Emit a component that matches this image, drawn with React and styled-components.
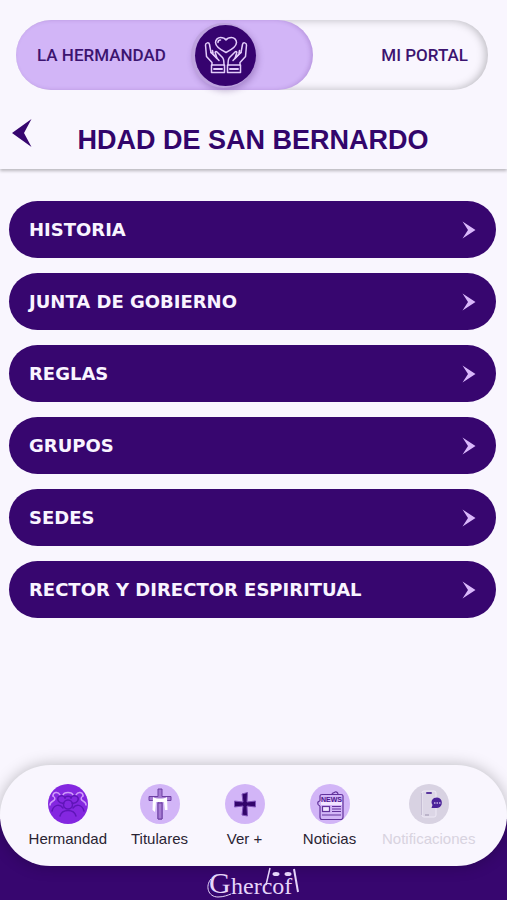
import React, { useState } from 'react';
import styled, { createGlobalStyle } from 'styled-components';

const sections = [
  'HISTORIA',
  'JUNTA DE GOBIERNO',
  'REGLAS',
  'GRUPOS',
  'SEDES',
  'RECTOR Y DIRECTOR ESPIRITUAL',
];

const HandsHeartIcon = () => (
  <svg width="44" height="38" viewBox="0 0 44 38" fill="none" stroke="#e3cdfb" strokeWidth="1.5" strokeLinejoin="round" strokeLinecap="round" aria-hidden="true">
    <path d="M22 16.5C17 14 11.500 11 11.500 6.500C11.500 3.500 14 1.500 16.500 1.500C19 1.500 21 2.500 22 4C23 2.500 25 1.500 27.500 1.500C30 1.500 32.500 3.500 32.500 6.500C32.500 11 27 14 22 16.500Z" />
    <path d="M14 6.500C14 5 15 4 16.500 4" />
    <path d="M8 29V26.500L2.500 20.500L1.500 9C1.500 6.500 5 6 5.500 8.500L7 16.500L9 17L8.500 14.500" />
    <path d="M7 16.500L13 22.500L11.500 17.500C10.500 15.500 12 15 13.500 16.500L18.500 21.500C20 23 20 24 20 29" />
    <path d="M9 18L15 24.500" />
    <path d="M36 29V26.500L41.500 20.500L42.500 9C42.500 6.500 39 6 38.500 8.500L37 16.500L35 17L35.500 14.500" />
    <path d="M37 16.500L31 22.500L32.500 17.500C33.500 15.500 32 15 30.500 16.500L25.500 21.500C24 23 24 24 24 29" />
    <path d="M35 18L29 24.500" />
    <rect x="7.500" y="29" width="13" height="7.500" />
    <rect x="23.500" y="29" width="13" height="7.500" />
    <path d="M10 33H18M26 33H34" strokeWidth="2" />
  </svg>
);

const BackIcon = () => (
  <svg width="20" height="28" viewBox="0 0 20 28" aria-hidden="true">
    <path d="M19.500 0L0 14L19.500 28L12 14Z" fill="#37066f" />
  </svg>
);

const ArrowIcon = () => (
  <svg width="14" height="18" viewBox="0 0 14 18" aria-hidden="true">
    <path d="M0.500 0.500L13.500 9L0.500 17.500L6 9Z" fill="#d9b8fb" />
  </svg>
);

const PeopleIcon = () => (
  <svg width="40" height="40" viewBox="0 0 40 40" fill="none" strokeWidth="1.500" strokeLinecap="round" aria-hidden="true">
    <g stroke="#cf9afa">
      <path d="M5 12C5 8 10 7 12 11" />
      <path d="M15 11C16 7.500 24 7.500 25 11" />
      <path d="M28 11C30 7 35 8 35 12" />
      <path d="M5 12C8 14 7 16 5 17C3 18 2 19 2 21" />
      <path d="M35 12C32 14 33 16 35 17C37 18 38 19 38 21" />
    </g>
    <g stroke="#5f15b8">
      <circle cx="20" cy="20.500" r="4.500" />
      <path d="M16 19C11 20 8 15 11 12.500C13 11 16 11.500 17 14" />
      <path d="M24 19C29 20 32 15 29 12.500C27 11 24 11.500 23 14" />
      <path d="M17 14C17 11.500 23 11.500 23 14" />
      <path d="M12 32C14 24.500 26 24.500 28 32" />
      <path d="M4 27C6 20 12 20 15 24" />
      <path d="M36 27C34 20 28 20 25 24" />
    </g>
  </svg>
);

const CrossIcon = () => (
  <svg width="40" height="40" viewBox="0 0 40 40" aria-hidden="true">
    <path d="M18 5H22V12.500H31V16.500H22V35H18V16.500H9V12.500H18Z" fill="#a57bd2" stroke="#6d3fa3" />
    <path d="M13 13C16 15 24 15 27 13L27.500 26H25L24 18H16L15 28L12.500 26Z" fill="#fff" />
    <path d="M18 19H22V35H18Z" fill="#a57bd2" stroke="#6d3fa3" />
  </svg>
);

const PlusIcon = () => (
  <svg width="40" height="40" viewBox="0 0 40 40" aria-hidden="true">
    <path d="M17 10L22.500 8.500L22 18L30.500 17V23L22 22L22.500 32L17 31L18 22L9.500 23V17L18 18Z" fill="#32056b" stroke="#8053ba" />
  </svg>
);

const NewsIcon = () => (
  <svg width="40" height="40" viewBox="0 0 40 40" fill="none" stroke="#62329b" strokeWidth="1.200" aria-hidden="true">
    <rect x="11" y="18" width="21" height="3" fill="#f1e5ff" stroke="none" />
    <path d="M10 17V12C10 11 11 10.500 12 10.500H31C32 10.500 33 11 33 12V33C33 34.500 32 35.500 31 35.500H12C11 35.500 10 34.500 10 33V22" />
    <path d="M22 10.500C22 8 24 9.500 25 8C27 7.500 28 9 28 10.500" />
    <path d="M10 17C7 17 7 21 10 22" />
    <text x="11" y="18" fill="#4d168b" stroke="none" fontFamily="Liberation Sans, sans-serif" fontSize="7" fontWeight="700">NEWS</text>
    <rect x="12.500" y="22.500" width="7" height="5" fill="#f1e5ff" />
    <path d="M22 22.500H31M22 25H31M22 27.500H31M12 31H31" />
  </svg>
);

const PhoneIcon = () => (
  <svg width="40" height="40" viewBox="0 0 40 40" aria-hidden="true">
    <rect x="13" y="7" width="14" height="26" rx="2" fill="#dcd6e6" stroke="#eee9f6" />
    <path d="M12.500 9V31" stroke="#c5bdd4" />
    <rect x="17" y="8" width="6" height="2" rx="1" fill="#5a369d" />
    <path d="M16 31H20" stroke="#9c93ae" />
    <path d="M22.500 24L23.500 21C21 17 24 13.500 28 13.500C34.500 13.500 34.500 24 28 24Z" fill="#4b2399" />
    <path d="M25 19H32" stroke="#c5b4e6" strokeWidth="1.500" strokeDasharray="1.500 1" />
  </svg>
);

const GhercofLogo = () => (
  <svg width="100" height="34" viewBox="0 0 100 34" role="img" aria-label="Ghercof">
    <g fill="#e6d5fa" fontFamily="Liberation Serif, serif">
      <text x="5" y="27" fontSize="30">G</text>
      <text x="27" y="28" fontSize="24">hercof</text>
    </g>
    <g stroke="#e6d5fa" fill="none">
      <path d="M66 2L62 19" strokeWidth="1.500" />
      <path d="M90 3L94 26" strokeWidth="2" />
      <path d="M7 13C1 20 4 31 14 31C20 31 24 29 27 28" />
    </g>
    <ellipse cx="72" cy="8" rx="3.500" ry="2" fill="#e6d5fa" />
    <ellipse cx="84" cy="8" rx="3.500" ry="2" fill="#e6d5fa" />
  </svg>
);

const navItems = [
  { label: 'Hermandad', icon: <PeopleIcon />, active: true },
  { label: 'Titulares', icon: <CrossIcon /> },
  { label: 'Ver +', icon: <PlusIcon /> },
  { label: 'Noticias', icon: <NewsIcon /> },
  { label: 'Notificaciones', icon: <PhoneIcon />, disabled: true },
];

const App = () => {
  const [, setSection] = useState(null);

  return (
    <>
      <GlobalStyle />
      <Page>
        <Header>
          <Switcher>
            <ActiveTab type="button">
              LA HERMANDAD
              <Knob><HandsHeartIcon /></Knob>
            </ActiveTab>
            <PortalTab type="button">MI PORTAL</PortalTab>
          </Switcher>
          <TitleRow>
            <BackButton type="button" aria-label="Volver"><BackIcon /></BackButton>
            <Title>HDAD DE SAN BERNARDO</Title>
          </TitleRow>
        </Header>
        <Menu>
          {sections.map((name) => (
            <MenuButton key={name} type="button" onClick={() => setSection(name)}>
              {name}
              <ArrowIcon />
            </MenuButton>
          ))}
        </Menu>
        <Bottom>
          <Nav>
            {navItems.map((item) => (
              <NavButton key={item.label} type="button" disabled={item.disabled}>
                <IconCircle $active={item.active} $disabled={item.disabled}>{item.icon}</IconCircle>
                {item.label}
              </NavButton>
            ))}
          </Nav>
          <Brand><GhercofLogo /></Brand>
        </Bottom>
      </Page>
    </>
  );
};

export default App;

const GlobalStyle = createGlobalStyle`
  * {
    box-sizing: border-box;
  }
  body {
    margin: 0;
    background-color: #f9f6fe;
    font-family: "Liberation Sans", Arial, sans-serif;
  }
  button {
    border: none;
    background: none;
    padding: 0;
    font-family: inherit;
    cursor: pointer;
  }
  svg {
    display: block;
  }
`;

const Page = styled.div`
  min-height: 100vh;
  display: flex;
  flex-direction: column;
`;

const Header = styled.header`
  padding: 20px 19px 13px 16px;
  box-shadow: 0 2px 3px rgba(0, 0, 0, 0.25);
`;

const Switcher = styled.div`
  display: flex;
  height: 70px;
  border-radius: 35px;
  box-shadow: inset -2px 0 8px rgba(0, 0, 0, 0.25);
`;

const Tab = styled.button`
  display: flex;
  align-items: center;
  font-family: Roboto, sans-serif;
  font-size: 17px;
  font-weight: 500;
  color: #3c1470;
`;

const ActiveTab = styled(Tab)`
  width: 63%;
  justify-content: space-between;
  padding: 0 57px 0 21px;
  border-radius: 35px;
  background-color: #d2b5f7;
  box-shadow: inset -2px 0 4px rgba(80, 30, 130, 0.2);
`;

const PortalTab = styled(Tab)`
  flex: 1;
  justify-content: flex-end;
  padding-right: 20px;
`;

const Knob = styled.span`
  display: flex;
  align-items: center;
  justify-content: center;
  width: 61px;
  height: 61px;
  border-radius: 50%;
  background-color: #36036f;
  box-shadow: -2px 0 0 2px #bea3df, 0 3px 6px 2px rgba(70, 30, 110, 0.3);
`;

const TitleRow = styled.div`
  display: flex;
  align-items: center;
  padding-top: 22px;
`;

const BackButton = styled.button`
  width: 20px;
  margin-left: -4px;
  padding-bottom: 2px;
`;

const Title = styled.h1`
  flex: 1;
  margin: 0;
  padding: 12px 14px 0 0;
  text-align: center;
  font-size: 27px;
  line-height: 32px;
  color: #32056b;
`;

const Menu = styled.main`
  display: flex;
  flex-direction: column;
  gap: 15px;
  padding: 32px 11px 32px 9px;
`;

const MenuButton = styled.button`
  display: flex;
  align-items: center;
  justify-content: space-between;
  height: 57px;
  padding: 0 20px;
  border-radius: 29px;
  background-color: #37066f;
  color: #f9f4ff;
  font-family: "DejaVu Sans", Verdana, sans-serif;
  font-size: 18px;
  font-weight: 700;
`;

const Bottom = styled.footer`
  margin-top: auto;
  background: linear-gradient(transparent 54px, #37066f 54px);
`;

const Nav = styled.nav`
  display: flex;
  justify-content: center;
  gap: 20px;
  height: 101px;
  padding: 19px 3px 0 0;
  border-radius: 51px;
  background-color: #f9f6fe;
  box-shadow: 0 0 15px rgba(0, 0, 0, 0.25);
`;

const NavButton = styled.button`
  display: flex;
  flex-direction: column;
  align-items: center;
  gap: 6px;
  height: 64px;
  min-width: 65px;
  font-size: 15px;
  line-height: 18px;
  color: #2a2433;
  &:disabled {
    color: #d8d3e0;
    cursor: default;
  }
`;

const IconCircle = styled.span`
  width: 40px;
  height: 40px;
  border-radius: 50%;
  overflow: hidden;
  background-color: ${({ $active, $disabled }) => ($active ? '#8427e0' : $disabled ? '#d8d2e2' : '#d2b5f7')};
`;

const Brand = styled.div`
  display: flex;
  justify-content: center;
  height: 34px;
`;
